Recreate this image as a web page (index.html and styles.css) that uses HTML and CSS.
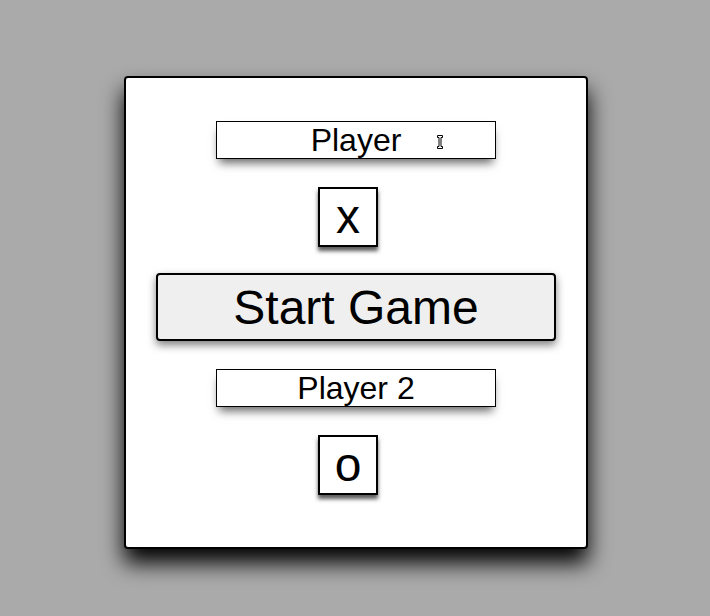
FILE: index.html
```html
<!DOCTYPE html>
<html>
<head>
<meta charset="utf-8">
<link rel="stylesheet" href="styles.css">
</head>
<body>
<div class="card">
  <div class="field-wrap">
    <input class="name" type="text" value="Player">
    <svg class="ibeam" width="8" height="16" viewBox="0 0 8 16"><path d="M1.5 1.5h5v2h-1.5v9h1.5v2h-5v-2h1.5v-9h-1.5z" fill="#fff" stroke="#000" stroke-width="1"/></svg>
  </div>
  <div class="mark">x</div>
  <button class="start">Start Game</button>
  <input class="name" type="text" value="Player 2">
  <div class="mark">o</div>
</div>
</body>
</html>
```
FILE: styles.css
```css
html, body {
  margin: 0;
  padding: 0;
}
body {
  background: #aaaaaa;
  font-family: "Liberation Sans", Arial, sans-serif;
  padding-top: 76px;
  height: 616px;
  box-sizing: border-box;
  overflow: hidden;
}
.card {
  width: 464px;
  height: 473px;
  box-sizing: border-box;
  margin: 0 0 0 124px;
  background: #fff;
  border: 2px solid #000;
  border-radius: 4px;
  box-shadow: 0 14px 22px #000;
  display: flex;
  flex-direction: column;
  align-items: center;
  padding-top: 43px;
}
.field-wrap {
  position: relative;
  width: 280px;
  height: 38px;
}
.name {
  width: 280px;
  height: 38px;
  box-sizing: border-box;
  border: 1px solid #000;
  border-radius: 0;
  background: #fff;
  font-family: "Liberation Sans", Arial, sans-serif;
  font-size: 32px;
  color: #000;
  text-align: center;
  padding: 0;
  margin: 0;
  outline: none;
  box-shadow: 0 7px 9px -3px rgba(0,0,0,0.6);
}
.ibeam {
  position: absolute;
  left: 220px;
  top: 13px;
}
.mark {
  width: 60px;
  height: 60px;
  box-sizing: border-box;
  border: 2px solid #000;
  background: #fff;
  font-size: 48px;
  line-height: 56px;
  text-align: center;
  margin-top: 28px;
  margin-right: 16px;
  box-shadow: 0 4px 4px rgba(0,0,0,0.65);
}
.start {
  width: 400px;
  height: 68px;
  box-sizing: border-box;
  margin-top: 26px;
  border: 2px solid #000;
  border-radius: 4px;
  background: #efefef;
  font-family: "Liberation Sans", Arial, sans-serif;
  font-size: 48px;
  color: #000;
  padding: 0;
  box-shadow: 0 4px 8px rgba(0,0,0,0.5);
}
.start + .name {
  margin-top: 28px;
}
```
